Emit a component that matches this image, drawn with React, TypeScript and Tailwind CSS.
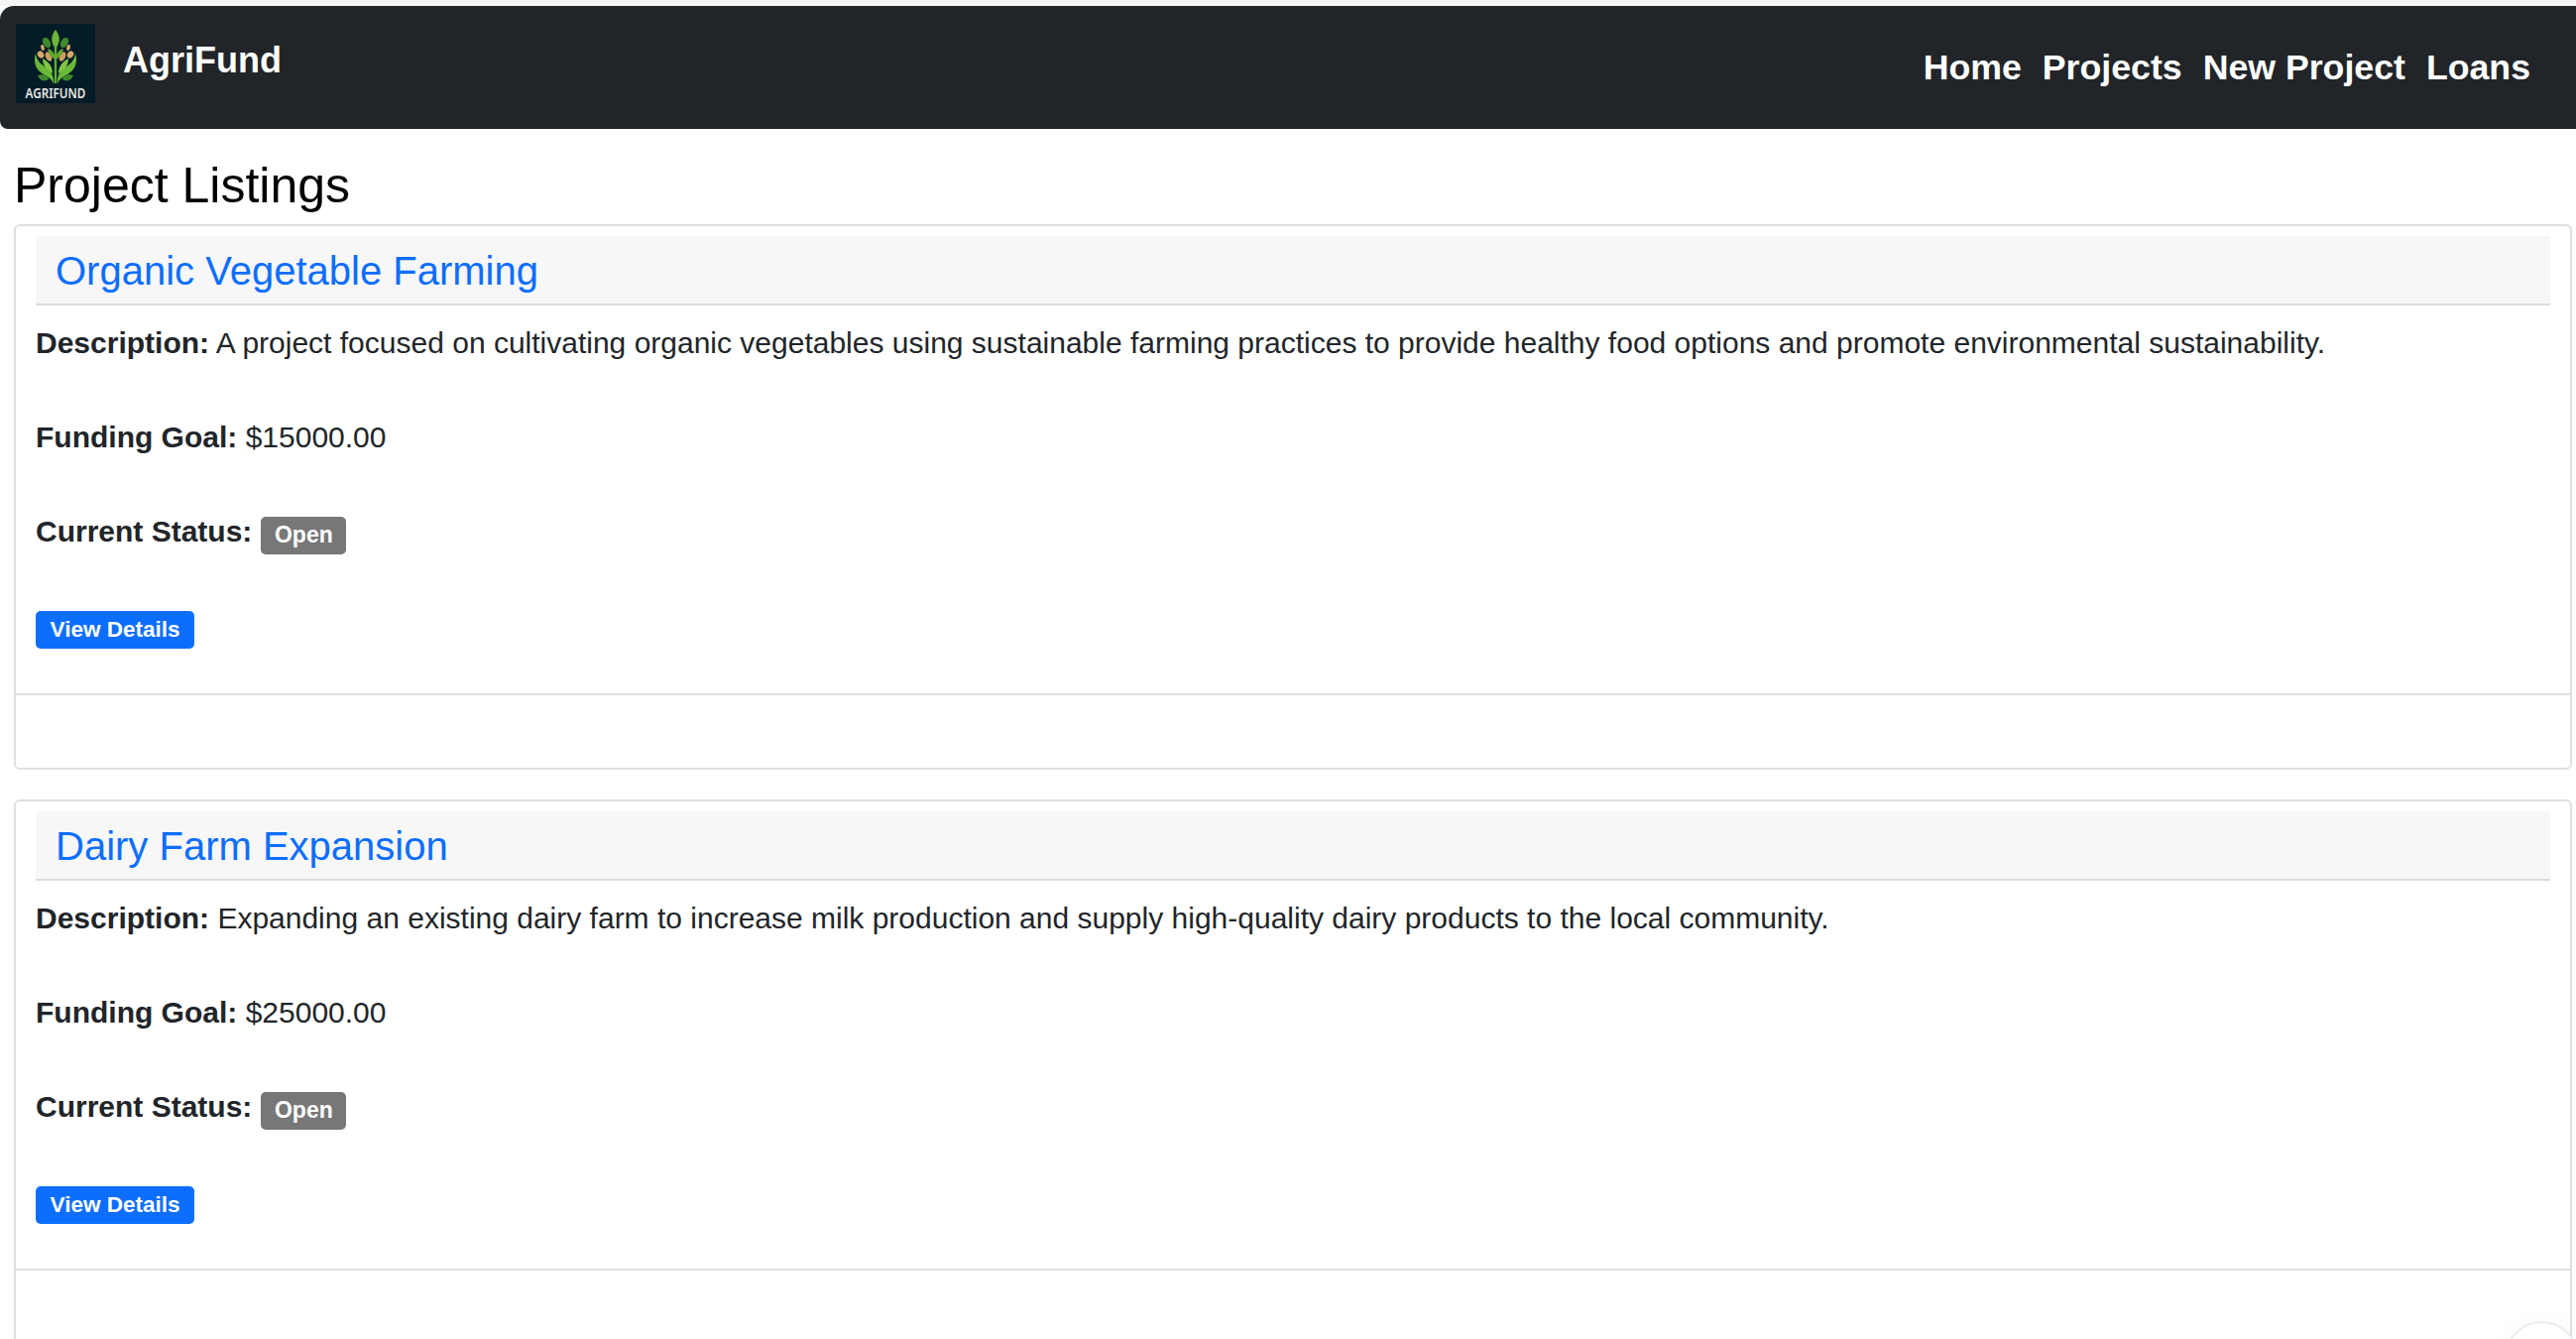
import React from "react";

const projects = [
  {
    title: "Organic Vegetable Farming",
    description:
      "A project focused on cultivating organic vegetables using sustainable farming practices to provide healthy food options and promote environmental sustainability.",
    goal: "$15000.00",
  },
  {
    title: "Dairy Farm Expansion",
    description:
      "Expanding an existing dairy farm to increase milk production and supply high-quality dairy products to the local community.",
    goal: "$25000.00",
  },
];

function Logo() {
  return (
    <div className="relative w-20 h-20 bg-[#041c27] shrink-0 overflow-hidden">
      <svg viewBox="0 0 80 80" className="absolute inset-0 w-20 h-20">
        {/* top leaf and stem */}
        <path d="M40 6c5 6 5 13 0 19c-5-6-5-13 0-19z" fill="#6fb53a" />
        <path d="M38.8 22h2.4v38h-2.4z" fill="#62ad34" />
        {/* side leaves */}
        <ellipse cx="31" cy="19" rx="3.6" ry="5.5" fill="#3f8a2c" transform="rotate(-30 31 19)" />
        <ellipse cx="49" cy="19" rx="3.6" ry="5.5" fill="#3f8a2c" transform="rotate(30 49 19)" />
        {/* seeds */}
        <ellipse cx="27" cy="24" rx="1.8" ry="3" fill="#d5aa68" transform="rotate(-15 27 24)" />
        <ellipse cx="53" cy="24" rx="1.8" ry="3" fill="#d5aa68" transform="rotate(15 53 24)" />
        <ellipse cx="25" cy="31" rx="3" ry="3.8" fill="#d5aa68" transform="rotate(-35 25 31)" />
        <ellipse cx="55" cy="31" rx="3" ry="3.8" fill="#d5aa68" transform="rotate(35 55 31)" />
        <ellipse cx="33" cy="33" rx="3" ry="5" fill="#c99f5e" transform="rotate(-25 33 33)" />
        <ellipse cx="47" cy="33" rx="3" ry="5" fill="#c99f5e" transform="rotate(25 47 33)" />
        {/* inner arcs */}
        <path d="M40 36c0-6 4-10 8-11c-1 6-4 9-8 11zM40 36c0-6-4-10-8-11c1 6 4 9 8 11z" fill="#5fa832" />
        {/* sweeping outer leaves */}
        <path d="M20 30c-3 10 1 17 8 21c5 3 9 5 10 10c1-9-3-14-9-18c-5-3-8-7-9-13z" fill="#6ab938" />
        <path d="M60 30c3 10-1 17-8 21c-5 3-9 5-10 10c-1-9 3-14 9-18c5-3 8-7 9-13z" fill="#6ab938" />
        <path d="M27 35c0 7 4 11 10 15c0-7-4-12-10-15zM53 35c0 7-4 11-10 15c0-7 4-12 10-15z" fill="#82c644" />
        {/* bottom leaves */}
        <path d="M22 52c5-2 10 0 11 4c-5 3-9 1-11-4zM58 52c-5-2-10 0-11 4c5 3 9 1 11-4z" fill="#3e8a2a" />
      </svg>
      <span className="absolute left-0 right-0 bottom-[1px] text-center font-['Noto_Sans',sans-serif] font-semibold text-[15px] leading-[20px] text-[#e4e8e4] scale-x-[0.78]">
        AGRIFUND
      </span>
    </div>
  );
}

function Navbar() {
  return (
    <nav className="h-[124px] bg-[#212529] rounded-tl-[14px] rounded-bl-[8px] flex justify-between pl-4 pr-[46px]">
      <div className="flex items-start pt-[18px]">
        <Logo />
        <a className="ml-7 mt-[13px] text-[36px] leading-[48px] font-bold text-white">AgriFund</a>
      </div>
      <div className="flex items-center gap-[21px] text-[35.7px] leading-[48px] font-bold text-white">
        <a>Home</a>
        <a>Projects</a>
        <a>New Project</a>
        <a>Loans</a>
      </div>
    </nav>
  );
}

function ProjectCard({ title, description, goal }: { title: string; description: string; goal: string }) {
  return (
    <div className="border-2 border-[#dfdfdf] rounded-[6px] mb-[30px]">
      <div className="pt-[10px] px-5">
        <div className="h-[70px] bg-[#f7f7f7] border-b-2 border-[#dcdcdc] pl-5 pt-[1px] flex items-center">
          <a className="text-[40px] leading-[60px] text-[#0d6efd]">{title}</a>
        </div>
        <div className="text-[30px] leading-[45px] text-[#212529]">
          <p className="mt-[15px] mb-[50px]">
            <b>Description:</b> {description}
          </p>
          <p className="mb-[50px]">
            <b>Funding Goal:</b> {goal}
          </p>
          <p className="mb-[57px] flex items-start">
            <b>Current Status:</b>
            <span className="ml-[9px] mt-[8px] pb-[2px] w-[86px] h-[38px] bg-[#777777] rounded-[5px] text-white text-[23px] font-bold flex items-center justify-center">
              Open
            </span>
          </p>
          <a className="mb-[45px] pb-[2px] w-[160px] h-[38px] bg-[#0d6efd] rounded-[5px] text-white text-[22.5px] font-bold flex items-center justify-center">
            View Details
          </a>
        </div>
      </div>
      <div className="h-[75px] border-t-2 border-[#dfdfdf]" />
    </div>
  );
}

export default function App() {
  return (
    <div className="relative h-[1350px] overflow-hidden bg-white pt-[6px] font-['Liberation_Sans',Arial,sans-serif]">
      <div className="absolute top-0 left-0 right-0 h-[6px] bg-[#f5f5f5]" />
      <Navbar />
      <main className="pl-[14px] pr-1">
        <h2 className="mt-[24px] mb-[6px] text-[50px] leading-[66px] text-black">Project Listings</h2>
        {projects.map((p) => (
          <ProjectCard key={p.title} {...p} />
        ))}
      </main>
      <div className="absolute left-[2526px] top-[1332px] w-[75px] h-[75px] rounded-full border-2 border-[#ebebf3] bg-white shadow-[0_0_24px_rgba(0,0,0,0.03)]" />
    </div>
  );
}
